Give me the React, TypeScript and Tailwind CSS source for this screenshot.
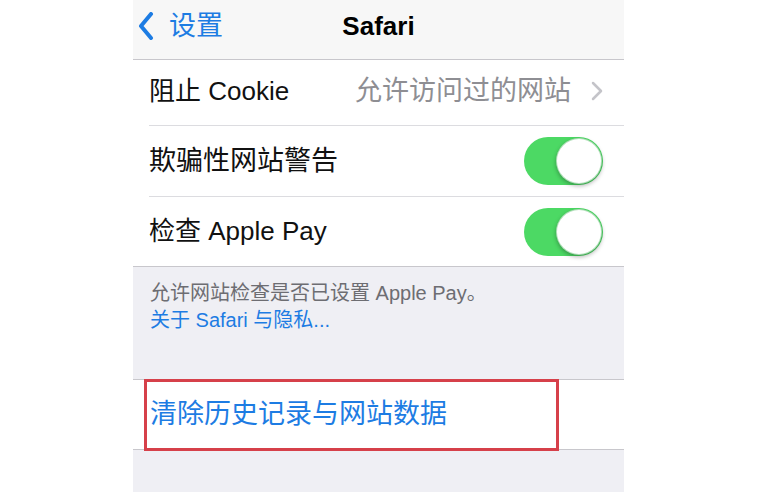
import React from 'react';

const font = { fontFamily: '"Liberation Sans", "Noto Sans CJK SC", sans-serif' };

const Toggle: React.FC = () => (
  <div className="w-[79px] h-[48px] rounded-full bg-[#4cd964] flex items-center justify-end pr-[1px]">
    <div className="w-[46px] h-[46px] rounded-full bg-white shadow-[0_2px_4px_rgba(0,0,0,0.3)] border border-[#3fae52]/40" />
  </div>
);

interface RowProps {
  height: string;
  last?: boolean;
  children: React.ReactNode;
}

const Row: React.FC<RowProps> = ({ height, last, children }) => (
  <div className={`bg-white pl-[16px] ${height}`}>
    <div
      className={`h-full flex items-center justify-between pr-[21px] ${
        last ? '' : 'border-b border-[#dcdce0]'
      }`}
    >
      {children}
    </div>
  </div>
);

export default function App() {
  return (
    <div className="w-[757px] h-[492px] bg-white flex justify-center overflow-hidden" style={font}>
      <div className="w-[491px] h-full bg-[#efeff4] flex flex-col">
        {/* nav bar */}
        <div className="h-[60px] shrink-0 bg-[#f7f7f7] border-b border-[#c8c7cc] pb-[7px] grid grid-cols-[1fr_auto_1fr] items-center">
          <div className="flex items-center pl-[5px] text-[#1d7ce3] text-[27px]">
            <svg width="16" height="28" viewBox="0 0 16 28" className="mr-[15px]">
              <path d="M13 2 L3 14 L13 26" fill="none" stroke="#1d7ce3" strokeWidth="4" strokeLinecap="round" strokeLinejoin="round" />
            </svg>
            <span>设置</span>
          </div>
          <div className="text-[26px] font-bold text-black">Safari</div>
          <div />
        </div>

        {/* settings group */}
        <div className="border-b border-[#c8c7cc]">
          <Row height="h-[66px]">
            <span className="text-[26px] text-[#111] pb-[3px]">阻止 Cookie</span>
            <div className="flex items-center text-[27px] text-[#8e8e93] pb-[3px]">
              <span>允许访问过的网站</span>
              <svg width="12" height="20" viewBox="0 0 12 20" className="ml-[20px]">
                <path d="M2 2 L10 10 L2 18" fill="none" stroke="#c4c4c9" strokeWidth="2.5" strokeLinecap="round" strokeLinejoin="round" />
              </svg>
            </div>
          </Row>
          <Row height="h-[71px]">
            <span className="text-[27px] text-[#111]">欺骗性网站警告</span>
            <Toggle />
          </Row>
          <Row height="h-[69px]" last>
            <span className="text-[26px] text-[#111]">检查 Apple Pay</span>
            <Toggle />
          </Row>
        </div>

        {/* footer */}
        <div className="h-[112px] shrink-0 pl-[17px] pt-[13px] text-[20px] leading-[27px]">
          <div className="text-[#6d6d72]">允许网站检查是否已设置 Apple Pay。</div>
          <div className="text-[#1d7ce3]">关于 Safari 与隐私...</div>
        </div>

        {/* clear history */}
        <div className="relative h-[71px] shrink-0 bg-white border-y border-[#c8c7cc] pl-[17px] flex items-center">
          <span className="text-[27px] text-[#1d7ce3]">清除历史记录与网站数据</span>
          <div className="absolute left-[11px] top-[-1px] w-[415px] h-[72px] border-[3px] border-[#d6404a]" />
        </div>
      </div>
    </div>
  );
}
